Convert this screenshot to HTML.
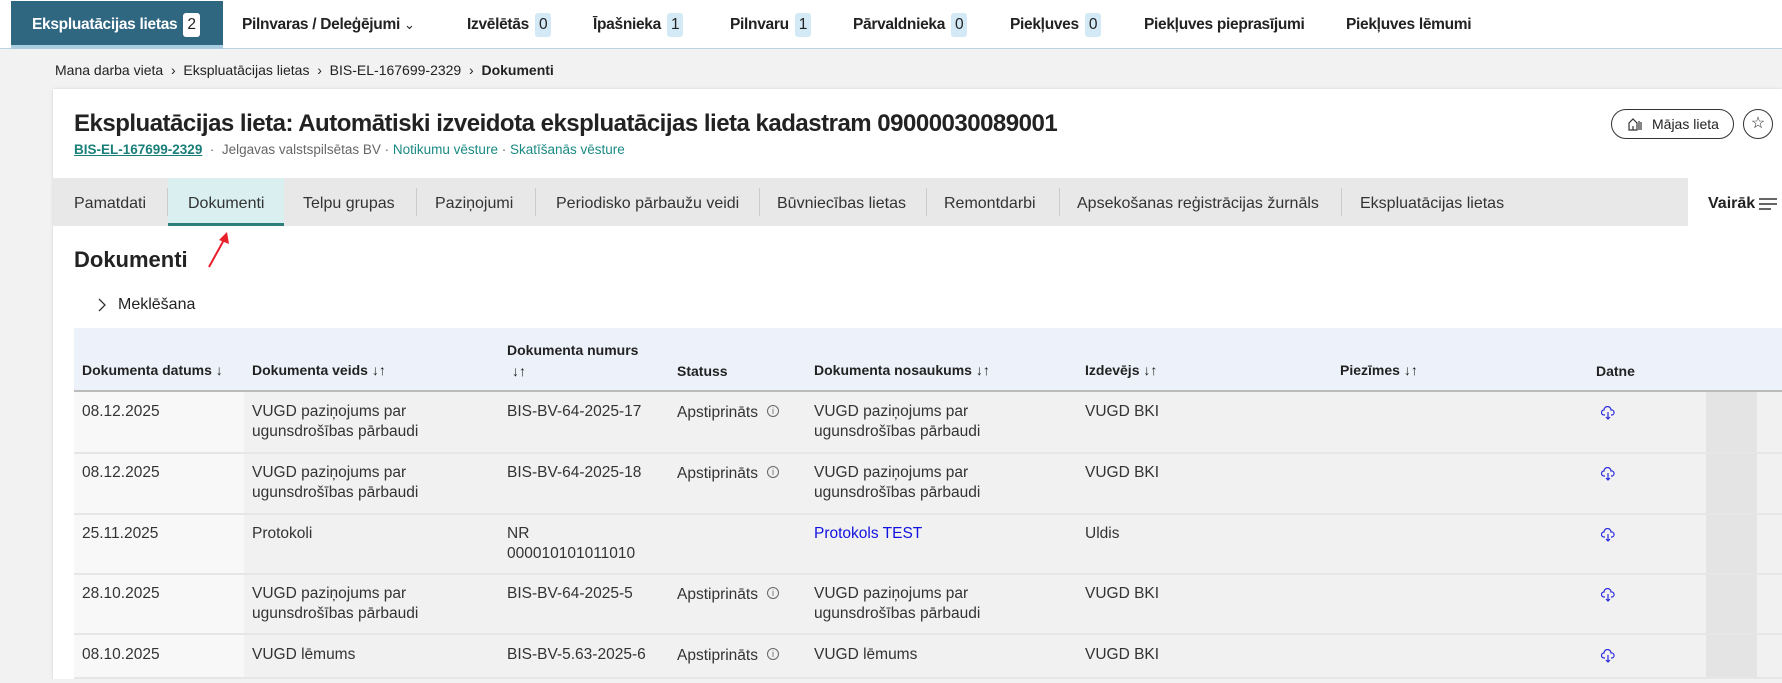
<!DOCTYPE html>
<html><head><meta charset="utf-8"><style>
*{box-sizing:border-box;margin:0;padding:0}
body{width:1782px;height:683px;overflow:hidden;background:#f2f2f2;font-family:"Liberation Sans",sans-serif;color:#222;position:relative}
.a{position:absolute;white-space:nowrap}
.nav{position:absolute;left:0;top:0;width:1782px;height:49px;background:#fff;border-bottom:1px solid #b9d3e0}
.ni{position:absolute;top:13px;font-size:15.5px;font-weight:bold;letter-spacing:-0.3px;color:#222;line-height:24px}
.bd{display:inline-block;background:#d3e9f6;padding:0 4px;margin-left:6px;font-weight:normal;border-radius:3px;line-height:24px}
.act{position:absolute;left:11px;top:1px;width:212px;height:48px;background:#2f6680;border-bottom:4px solid #a9cde0}
.card{position:absolute;left:53px;top:89px;width:1729px;height:594px;background:#fff;box-shadow:0 0 3px rgba(0,0,0,.12)}
.tabs{position:absolute;left:53px;top:178px;width:1635px;height:48px;background:#e8e8e8}
.tb{position:absolute;top:195px;font-size:16px;color:#333}
.sep{position:absolute;top:188px;width:1px;height:28px;background:#ccc}
.th{position:absolute;font-size:14px;font-weight:bold;color:#222}
.td{position:absolute;font-size:15.5px;color:#333;line-height:20px}
.ic{position:absolute;width:12px;height:12px;border:1px solid #666;border-radius:50%;font-size:9px;line-height:10px;text-align:center;color:#666}
</style></head><body>
<div class="nav"></div>
<div class="act"></div>
<div class="ni" style="left:32px;color:#fff">Ekspluatācijas lietas<span class="bd" style="background:#fff;color:#222">2</span></div>
<div class="ni" style="left:242px">Pilnvaras / Deleģējumi <span style="font-weight:normal;font-size:13px">&#8964;</span></div>
<div class="ni" style="left:467px">Izvēlētās<span class="bd">0</span></div>
<div class="ni" style="left:593px">Īpašnieka<span class="bd">1</span></div>
<div class="ni" style="left:730px">Pilnvaru<span class="bd">1</span></div>
<div class="ni" style="left:853px">Pārvaldnieka<span class="bd">0</span></div>
<div class="ni" style="left:1010px">Piekļuves<span class="bd">0</span></div>
<div class="ni" style="left:1144px">Piekļuves pieprasījumi</div>
<div class="ni" style="left:1346px">Piekļuves lēmumi</div>

<div class="a" style="left:55px;top:62px;font-size:14px;color:#222">Mana darba vieta &nbsp;›&nbsp; Ekspluatācijas lietas &nbsp;›&nbsp; BIS-EL-167699-2329 &nbsp;›&nbsp; <b>Dokumenti</b></div>

<div class="card"></div>
<div class="a" style="left:74px;top:110px;font-size:24px;font-weight:bold;letter-spacing:-0.5px;color:#222">Ekspluatācijas lieta: Automātiski izveidota ekspluatācijas lieta kadastram 09000030089001</div>
<div class="a" style="left:74px;top:142px;font-size:13.5px;color:#666"><b style="color:#1a7f78;text-decoration:underline">BIS-EL-167699-2329</b> &nbsp;·&nbsp; Jelgavas valstspilsētas BV · <span style="color:#1a8a83">Notikumu vēsture</span> · <span style="color:#1a8a83">Skatīšanās vēsture</span></div>
<div class="a" style="left:1611px;top:109px;width:123px;height:30px;border:1px solid #333;border-radius:15px;font-size:14px;line-height:28px;padding-left:40px;color:#222">Mājas lieta</div>
<svg class="a" style="left:1627px;top:116px" width="16" height="16" viewBox="0 0 16 16" fill="none" stroke="#333" stroke-width="1.2"><path d="M2 14V7l4-4 4 4v7H2zM6 14v-4M12 5v9M14 6v8"/></svg>
<div class="a" style="left:1743px;top:109px;width:30px;height:30px;border:1px solid #333;border-radius:50%;text-align:center;line-height:28px;font-size:16px">☆</div>

<div class="tabs"></div>
<div class="a" style="left:1688px;top:178px;width:94px;height:48px;background:#fff"></div>
<div class="a" style="left:168px;top:178px;width:116px;height:48px;background:#d9eff0;border-bottom:3px solid #2e7d7a"></div>
<div class="tb" style="left:74px">Pamatdati</div>
<div class="tb" style="left:188px">Dokumenti</div>
<div class="tb" style="left:303px">Telpu grupas</div>
<div class="tb" style="left:435px">Paziņojumi</div>
<div class="tb" style="left:556px">Periodisko pārbaužu veidi</div>
<div class="tb" style="left:777px">Būvniecības lietas</div>
<div class="tb" style="left:944px">Remontdarbi</div>
<div class="tb" style="left:1077px">Apsekošanas reģistrācijas žurnāls</div>
<div class="tb" style="left:1360px">Ekspluatācijas lietas</div>
<div class="sep" style="left:167px"></div><div class="sep" style="left:416px"></div><div class="sep" style="left:535px"></div><div class="sep" style="left:759px"></div><div class="sep" style="left:926px"></div><div class="sep" style="left:1059px"></div><div class="sep" style="left:1341px"></div>
<div class="a" style="left:1708px;top:195px;font-size:16px;font-weight:bold;color:#222">Vairāk</div>
<svg class="a" style="left:1759px;top:197px" width="18" height="14"><path d="M0 2h18M0 7h18M0 12h12" stroke="#333" stroke-width="1.5"/></svg>

<svg class="a" style="left:205px;top:230px" width="26" height="40"><path d="M4 37L20 8" stroke="#e8202a" stroke-width="2"/><path d="M22 2L14 10L24 14Z" fill="#e8202a"/></svg>

<div class="a" style="left:74px;top:247px;font-size:22px;font-weight:bold;color:#222">Dokumenti</div>
<svg class="a" style="left:97px;top:297px" width="10" height="16"><path d="M2 2l6 6-6 6" fill="none" stroke="#333" stroke-width="1.3"/></svg>
<div class="a" style="left:118px;top:296px;font-size:16px;color:#222">Meklēšana</div>

<div class="a" style="left:74px;top:328px;width:1708px;height:64px;background:#edf2fa;border-bottom:2px solid #bbb"></div>
<div class="a" style="left:74px;top:392px;width:1708px;height:291px;background:#f1f1f1"></div>
<div class="a" style="left:74px;top:392px;width:170px;height:291px;background:#f8f8f8"></div>
<div class="a" style="left:1706px;top:392px;width:51px;height:291px;background:#e4e4e4"></div>
<div class="a" style="left:74px;top:452px;width:1708px;height:2px;background:#e6e6e6"></div>
<div class="a" style="left:74px;top:513px;width:1708px;height:2px;background:#e6e6e6"></div>
<div class="a" style="left:74px;top:573px;width:1708px;height:2px;background:#e6e6e6"></div>
<div class="a" style="left:74px;top:633px;width:1708px;height:2px;background:#e6e6e6"></div>
<div class="a" style="left:74px;top:677px;width:1708px;height:2px;background:#e6e6e6"></div>
<div class="a" style="left:0;top:679px;width:1782px;height:4px;background:#f2f2f2"></div>

<div class="th" style="left:82px;top:362px">Dokumenta datums ↓</div>
<div class="th" style="left:252px;top:362px">Dokumenta veids ↓↑</div>
<div class="th" style="left:507px;top:342px">Dokumenta numurs</div>
<div class="th" style="left:512px;top:363px">↓↑</div>
<div class="th" style="left:677px;top:363px">Statuss</div>
<div class="th" style="left:814px;top:362px">Dokumenta nosaukums ↓↑</div>
<div class="th" style="left:1085px;top:362px">Izdevējs ↓↑</div>
<div class="th" style="left:1340px;top:362px">Piezīmes ↓↑</div>
<div class="th" style="left:1596px;top:363px">Datne</div>

<div class="td" style="left:82px;top:402px">08.12.2025</div>
<div class="td" style="left:252px;top:402px">VUGD paziņojums par<br>ugunsdrošības pārbaudi</div>
<div class="td" style="left:507px;top:402px">BIS-BV-64-2025-17</div>
<div class="td" style="left:677px;top:403px">Apstiprināts</div><div class="ic" style="left:767px;top:405px">i</div>
<div class="td" style="left:814px;top:402px">VUGD paziņojums par<br>ugunsdrošības pārbaudi</div>
<div class="td" style="left:1085px;top:402px">VUGD BKI</div>

<div class="td" style="left:82px;top:463px">08.12.2025</div>
<div class="td" style="left:252px;top:463px">VUGD paziņojums par<br>ugunsdrošības pārbaudi</div>
<div class="td" style="left:507px;top:463px">BIS-BV-64-2025-18</div>
<div class="td" style="left:677px;top:464px">Apstiprināts</div><div class="ic" style="left:767px;top:466px">i</div>
<div class="td" style="left:814px;top:463px">VUGD paziņojums par<br>ugunsdrošības pārbaudi</div>
<div class="td" style="left:1085px;top:463px">VUGD BKI</div>

<div class="td" style="left:82px;top:524px">25.11.2025</div>
<div class="td" style="left:252px;top:524px">Protokoli</div>
<div class="td" style="left:507px;top:524px">NR<br>000010101011010</div>
<div class="td" style="left:814px;top:524px;color:#1212e0">Protokols TEST</div>
<div class="td" style="left:1085px;top:524px">Uldis</div>

<div class="td" style="left:82px;top:584px">28.10.2025</div>
<div class="td" style="left:252px;top:584px">VUGD paziņojums par<br>ugunsdrošības pārbaudi</div>
<div class="td" style="left:507px;top:584px">BIS-BV-64-2025-5</div>
<div class="td" style="left:677px;top:585px">Apstiprināts</div><div class="ic" style="left:767px;top:587px">i</div>
<div class="td" style="left:814px;top:584px">VUGD paziņojums par<br>ugunsdrošības pārbaudi</div>
<div class="td" style="left:1085px;top:584px">VUGD BKI</div>

<div class="td" style="left:82px;top:645px">08.10.2025</div>
<div class="td" style="left:252px;top:645px">VUGD lēmums</div>
<div class="td" style="left:507px;top:645px">BIS-BV-5.63-2025-6</div>
<div class="td" style="left:677px;top:646px">Apstiprināts</div><div class="ic" style="left:767px;top:648px">i</div>
<div class="td" style="left:814px;top:645px">VUGD lēmums</div>
<div class="td" style="left:1085px;top:645px">VUGD BKI</div>

<svg class="a" style="left:1601px;top:406px" width="14" height="14" viewBox="0 0 14 14" fill="none" stroke="#2b2be0" stroke-width="1.2"><path d="M4 9H3a2.5 2.5 0 0 1 0-5 3.5 3.5 0 0 1 7 0 2.5 2.5 0 0 1 1 5h-1M7 6v7M5 11l2 2 2-2"/></svg>
<svg class="a" style="left:1601px;top:467px" width="14" height="14" viewBox="0 0 14 14" fill="none" stroke="#2b2be0" stroke-width="1.2"><path d="M4 9H3a2.5 2.5 0 0 1 0-5 3.5 3.5 0 0 1 7 0 2.5 2.5 0 0 1 1 5h-1M7 6v7M5 11l2 2 2-2"/></svg>
<svg class="a" style="left:1601px;top:528px" width="14" height="14" viewBox="0 0 14 14" fill="none" stroke="#2b2be0" stroke-width="1.2"><path d="M4 9H3a2.5 2.5 0 0 1 0-5 3.5 3.5 0 0 1 7 0 2.5 2.5 0 0 1 1 5h-1M7 6v7M5 11l2 2 2-2"/></svg>
<svg class="a" style="left:1601px;top:588px" width="14" height="14" viewBox="0 0 14 14" fill="none" stroke="#2b2be0" stroke-width="1.2"><path d="M4 9H3a2.5 2.5 0 0 1 0-5 3.5 3.5 0 0 1 7 0 2.5 2.5 0 0 1 1 5h-1M7 6v7M5 11l2 2 2-2"/></svg>
<svg class="a" style="left:1601px;top:649px" width="14" height="14" viewBox="0 0 14 14" fill="none" stroke="#2b2be0" stroke-width="1.2"><path d="M4 9H3a2.5 2.5 0 0 1 0-5 3.5 3.5 0 0 1 7 0 2.5 2.5 0 0 1 1 5h-1M7 6v7M5 11l2 2 2-2"/></svg>
</body></html>
